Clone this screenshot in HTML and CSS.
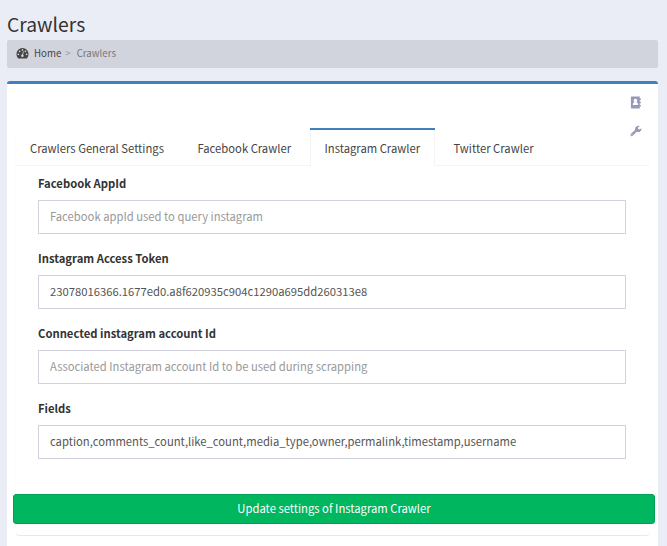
FILE: index.html
```html
<!DOCTYPE html>
<html lang="en">
<head>
<meta charset="utf-8">
<title>Crawlers</title>
<link rel="stylesheet" href="styles.css">
</head>
<body>
<header class="content-header">
  <h1>Crawlers</h1>
  <nav class="breadcrumb">
    <svg class="gauge" viewBox="0 0 14 12"><path fill="#444" d="M1.9 11.5A6.6 6.6 0 0 1 .5 7.1a6.5 6.5 0 0 1 13 0 6.6 6.6 0 0 1-1.4 4.4q-.3.3-.7.3H2.600q-.4 0-.7-.3z"/><g fill="#d2d6de"><circle cx="2.500" cy="7.400" r=".9"/><circle cx="3.900" cy="4.200" r=".9"/><circle cx="7" cy="2.700" r=".9"/><circle cx="10.100" cy="4.200" r=".9"/><circle cx="11.500" cy="7.400" r=".9"/><circle cx="6.900" cy="9" r="1.400"/><path d="M6.500 8.700l1.100-4.500.8.2-1.100 4.500z"/></g></svg>
    <a>Home</a><span class="sep">&gt;</span><span class="current">Crawlers</span>
  </nav>
</header>
<main class="box">
  <div class="box-tools">
    <svg viewBox="0 0 10 12"><path fill="#9799b8" fill-rule="evenodd" d="M1 .5h7.500v1.700h1v1.500h-1v1.500h1v1.500h-1v1.500h1v1.500h-1v1.800H1q-.7 0-.7-.7V1.200Q.3.500 1 .5zm3.500 2.100a1.600 1.600 0 0 0-.8 3Q2 6 2 8.200h5Q7 6 5.300 5.600a1.600 1.600 0 0 0-.8-3z"/></svg>
    <svg viewBox="0 0 12 12"><path fill="#9799b8" fill-rule="evenodd" d="M6.700 6.800L2.500 11q-.7.600-1.400 0l-.5-.6q-.5-.7.100-1.300L5 4.900Q4.800 2.500 6.500 1.300 8.100.2 10 .9L8 2.200v1.500l1.300.8 2.200-1.300q.1 2.300-1.400 3.300-1.500 1-3.400.3zM1.900 9.300a.5.500 0 1 0 .1 1 .5.500 0 0 0-.1-1z"/></svg>
  </div>
  <section class="tabs-custom">
    <ul class="tabs">
      <li class="t1"><span>Crawlers General Settings</span></li>
      <li class="t2"><span>Facebook Crawler</span></li>
      <li class="t3 active"><span>Instagram Crawler</span></li>
      <li class="t4"><span>Twitter Crawler</span></li>
    </ul>
    <form class="tab-content">
      <div class="group"><label for="appid">Facebook AppId</label><input id="appid" type="text" placeholder="Facebook appId used to query instagram"></div>
      <div class="group"><label for="token">Instagram Access Token</label><input id="token" type="text" value="23078016366.1677ed0.a8f620935c904c1290a695dd260313e8"></div>
      <div class="group"><label for="account">Connected instagram account Id</label><input id="account" type="text" placeholder="Associated Instagram account Id to be used during scrapping"></div>
      <div class="group"><label for="fields">Fields</label><input id="fields" type="text" value="caption,comments_count,like_count,media_type,owner,permalink,timestamp,username"></div>
      <button type="button">Update settings of Instagram Crawler</button>
    </form>
  </section>
</main>
</body>
</html>
```
FILE: styles.css
```css
* { box-sizing: border-box; }
body {
  margin: 0;
  padding: 0 9px 0 7px;
  height: 546px;
  overflow: hidden;
  display: flex;
  flex-direction: column;
  background: #eaedf6;
  color: #333;
  font: 11.26px/20px "Noto Sans CJK SC", sans-serif;
}
h1 {
  margin: 0;
  padding-top: 11px;
  height: 40px;
  font-size: 19.3px;
  line-height: 26px;
  font-weight: 400;
}
.breadcrumb {
  display: flex;
  align-items: center;
  height: 28px;
  padding-left: 9px;
  border-radius: 2px;
  background: #d2d4dd;
  font-size: 9.7px;
  color: #444;
}
.breadcrumb a, .sep, .current { position: relative; top: -1px; }
.gauge { width: 13px; height: 12px; margin: -2px 5px 0 0; }
.sep { margin: 0 6px 0 4px; color: #a0a0ba; }
.current { color: #777; }
.box {
  flex: 1;
  margin-top: 13px;
  border-top: 3px solid #4080be;
  border-radius: 3px 3px 0 0;
  background: #fff;
  position: relative;
  padding: 44px 9px 0;
}
.box-tools {
  position: absolute;
  right: 16px;
  top: 12px;
  display: flex;
  flex-direction: column;
  align-items: center;
  gap: 17px;
}
.box-tools svg { width: 12px; height: 12px; }
.box-tools svg:first-child { height: 13px; margin-bottom: -1px; }
.tabs-custom {
  height: 407px;
  border-radius: 3px;
  box-shadow: 0 1px 1px rgba(0, 0, 0, .1);
}
.tabs {
  display: flex;
  height: 38px;
  margin: 0;
  padding: 0;
  list-style: none;
  border-bottom: 1px solid #f4f4f4;
  color: #444;
}
.tabs li {
  height: 38px;
  padding-top: 8px;
  border-top: 2px solid transparent;
  white-space: nowrap;
}
.t1 { width: 168px; padding-left: 14px; }
.t2 { width: 126px; padding-left: 13.5px; }
.t3 { width: 125px; padding-left: 14.5px; }
.t4 { padding-left: 18.500px; }
.tabs li.active {
  border-top-color: #4080be;
  background: linear-gradient(#f4f4f4, #f4f4f4) left / 1px 100% no-repeat, linear-gradient(#f4f4f4, #f4f4f4) right / 1px 100% no-repeat, #fff;
}
.tab-content { padding: 7px 23px 0 22px; }
.group { height: 75px; }
label {
  display: block;
  height: 27px;
  line-height: 20px;
  font-weight: 700;
}
input {
  display: block;
  width: 100%;
  height: 34px;
  padding: 0 11px 2px;
  border: 1px solid #d2d2de;
  border-radius: 0;
  background: #fff;
  color: #555;
  font: inherit;
}
input::placeholder { color: #999; opacity: 1; }
button {
  display: block;
  position: relative;
  width: 642px;
  height: 30px;
  margin: 21px 0 0 -25px;
  padding: 0 0 2px;
  border: 1px solid #00a157;
  border-radius: 3px;
  background: #00b65e;
  color: #fff;
  font: inherit;
}
```
